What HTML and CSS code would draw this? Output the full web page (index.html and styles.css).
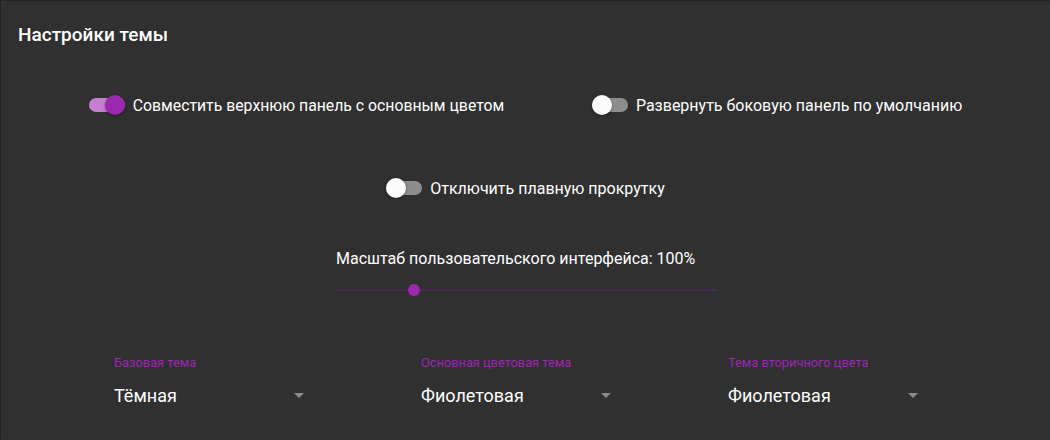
FILE: index.html
```html
<!DOCTYPE html>
<html lang="ru">
<head>
<meta charset="utf-8">
<link rel="stylesheet" href="styles.css">
</head>
<body>
<div class="card">
  <h2 class="title">Настройки темы</h2>
  <div class="row row-two">
    <label class="toggle checked"><span class="track"><span class="thumb"></span></span><span class="text">Совместить верхнюю панель с основным цветом</span></label>
    <label class="toggle"><span class="track"><span class="thumb"></span></span><span class="text">Развернуть боковую панель по умолчанию</span></label>
  </div>
  <div class="row row-one">
    <label class="toggle"><span class="track"><span class="thumb"></span></span><span class="text">Отключить плавную прокрутку</span></label>
  </div>
  <div class="scale">
    <div class="scale-label">Масштаб пользовательского интерфейса: 100%</div>
    <div class="slider"><span class="slider-thumb" style="left: 20.5%"></span></div>
  </div>
  <div class="selects">
    <div class="field">
      <div class="field-label">Базовая тема</div>
      <div class="field-value"><span>Тёмная</span><span class="arrow"></span></div>
    </div>
    <div class="field">
      <div class="field-label">Основная цветовая тема</div>
      <div class="field-value"><span>Фиолетовая</span><span class="arrow"></span></div>
    </div>
    <div class="field">
      <div class="field-label">Тема вторичного цвета</div>
      <div class="field-value"><span>Фиолетовая</span><span class="arrow"></span></div>
    </div>
  </div>
</div>
</body>
</html>
```
FILE: styles.css
```css
html, body {
  margin: 0;
  padding: 0;
  background: #303030;
  font-family: Roboto, "Liberation Sans", sans-serif;
  color: #fff;
}
.card {
  height: 439px;
  border-top: 1px solid #242424;
  border-left: 1px solid #242424;
  background: #303030;
  box-sizing: border-box;
  overflow: hidden;
}
.title {
  margin: 0;
  padding: 23px 0 0 17px;
  font-size: 19px;
  font-weight: 500;
  line-height: 22px;
}
.row {
  display: flex;
  align-items: center;
  height: 24px;
}
.row-two {
  justify-content: space-evenly;
  margin-top: 47px;
}
.row-one {
  justify-content: center;
  margin-top: 59px;
}
.toggle {
  display: flex;
  align-items: center;
  gap: 8px;
  font-size: 16px;
}
.row-two .toggle:first-child { font-size: 15.8px; }
.track {
  position: relative;
  width: 36px;
  height: 14px;
  border-radius: 7px;
  background: #8d8d8d;
}
.thumb {
  position: absolute;
  top: -3px;
  left: 0;
  width: 20px;
  height: 20px;
  border-radius: 50%;
  background: #fafafa;
  box-shadow: 0 1px 3px rgba(0,0,0,.4);
}
.toggle.checked .track { background: #c57fd0; }
.toggle.checked .thumb { left: 16px; background: #9c27b0; }
.scale {
  width: 380px;
  margin: 49px auto 0;
  padding-left: 1px;
}
.scale-label {
  font-size: 16px;
  line-height: 20px;
}
.slider {
  position: relative;
  height: 2px;
  margin-top: 20px;
  background: #4a2a55;
}
.slider-thumb {
  position: absolute;
  top: -5px;
  width: 12px;
  height: 12px;
  margin-left: -6px;
  border-radius: 50%;
  background: #9c27b0;
}
.selects {
  display: grid;
  grid-template-columns: repeat(3, 307px);
  padding-left: 113px;
  margin-top: 64px;
}
.field {
  width: 190px;
}
.field-label {
  color: #9c27b0;
  font-size: 12.8px;
  line-height: 16px;
}
.field-value {
  display: flex;
  align-items: center;
  justify-content: space-between;
  margin-top: 14px;
  font-size: 18px;
  line-height: 22px;
}
.arrow {
  width: 0;
  height: 0;
  margin-bottom: 2px;
  border-left: 5px solid transparent;
  border-right: 5px solid transparent;
  border-top: 5px solid #8a8a8a;
}
```
